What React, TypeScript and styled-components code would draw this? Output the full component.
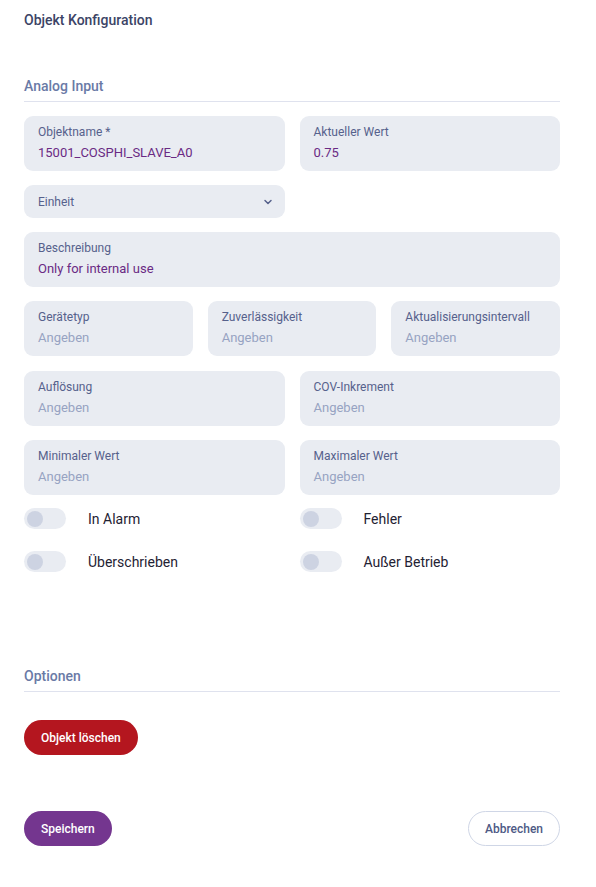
import React, { FC } from 'react'
import styled, { createGlobalStyle } from 'styled-components'

const GlobalStyle = createGlobalStyle`
  body {
    margin: 0;
    background: #fff;
    font-family: Roboto, "Liberation Sans", sans-serif;
  }
`

const Page = styled.div`
  width: 536px;
  padding: 12px 24px 40px;
  display: flex;
  flex-direction: column;
`

const Title = styled.h1`
  margin: 0;
  font-size: 14px;
  line-height: 17px;
  font-weight: 500;
  color: #3c4466;
`

const SectionTitle = styled.h2<{ $top: number }>`
  margin: ${(p) => p.$top}px 0 0;
  padding-bottom: 6px;
  border-bottom: 1px solid #dfe2ee;
  font-size: 14px;
  line-height: 17px;
  font-weight: 500;
  color: #6a7aa6;
`

const Grid = styled.div<{ $cols: number; $top?: number }>`
  display: grid;
  grid-template-columns: repeat(${(p) => p.$cols}, 1fr);
  column-gap: 15px;
  margin-top: ${(p) => p.$top ?? 14}px;
`

const Field = styled.div<{ $span?: number }>`
  grid-column: span ${(p) => p.$span ?? 1};
  height: 55px;
  box-sizing: border-box;
  padding: 9px 14px 0;
  background: #e9ecf2;
  border-radius: 9px;
  display: flex;
  flex-direction: column;
  gap: 6px;
`

const Label = styled.span`
  font-size: 12px;
  line-height: 14px;
  color: #56618c;
  white-space: nowrap;
`

const Value = styled.span<{ $placeholder?: boolean }>`
  font-size: 13px;
  line-height: 16px;
  color: ${(p) => (p.$placeholder ? '#97a3c2' : '#6a2a84')};
`

const Select = styled.div`
  height: 33px;
  box-sizing: border-box;
  padding: 0 12px 0 14px;
  background: #e9ecf2;
  border-radius: 9px;
  display: flex;
  align-items: center;
  justify-content: space-between;
  font-size: 12px;
  color: #56618c;
`

const ToggleGrid = styled.div`
  display: grid;
  grid-template-columns: 1fr 1fr;
  column-gap: 15px;
  row-gap: 22px;
  margin-top: 13px;
`

const ToggleRow = styled.label`
  display: flex;
  align-items: center;
  gap: 22px;
  font-size: 14px;
  color: #1f2233;
`

const Track = styled.span`
  width: 42px;
  height: 21px;
  border-radius: 11px;
  background: #e9ecf2;
  display: flex;
  align-items: center;
  padding-left: 3px;
  box-sizing: border-box;
`

const Knob = styled.span`
  width: 16px;
  height: 16px;
  border-radius: 50%;
  background: #cdd3e2;
`

const Button = styled.button<{ $variant: 'danger' | 'primary' | 'outline' }>`
  height: 35px;
  padding: 0 16px;
  border-radius: 18px;
  font-family: inherit;
  font-size: 12px;
  font-weight: 500;
  cursor: pointer;
  background: ${(p) =>
    p.$variant === 'danger' ? '#b4161f' : p.$variant === 'primary' ? '#74368f' : '#fff'};
  color: ${(p) => (p.$variant === 'outline' ? '#4e5a85' : '#fff')};
  border: 1px solid ${(p) => (p.$variant === 'outline' ? '#cfd6e6' : 'transparent')};
`

const DeleteRow = styled.div`
  margin-top: 28px;
  display: flex;
`

const Footer = styled.div`
  margin-top: 56px;
  display: flex;
  justify-content: space-between;
`

const Chevron: FC = () => (
  <svg width="10" height="10" viewBox="0 0 10 10" fill="none">
    <path d="M2 3.5 5 6.5 8 3.5" stroke="#56618c" strokeWidth="1.5" strokeLinecap="round" strokeLinejoin="round" />
  </svg>
)

const Toggle: FC<{ label: string }> = ({ label }) => (
  <ToggleRow>
    <Track>
      <Knob />
    </Track>
    {label}
  </ToggleRow>
)

const Input: FC<{ label: string; value?: string; span?: number }> = ({ label, value, span }) => (
  <Field $span={span}>
    <Label>{label}</Label>
    <Value $placeholder={!value}>{value ?? 'Angeben'}</Value>
  </Field>
)

const App: FC = () => (
  <>
    <GlobalStyle />
    <Page>
      <Title>Objekt Konfiguration</Title>

      <SectionTitle $top={49}>Analog Input</SectionTitle>

      <Grid $cols={2}>
        <Input label="Objektname *" value="15001_COSPHI_SLAVE_A0" />
        <Input label="Aktueller Wert" value="0.75" />
      </Grid>

      <Grid $cols={2}>
        <Select>
          Einheit
          <Chevron />
        </Select>
      </Grid>

      <Grid $cols={2}>
        <Input label="Beschreibung" value="Only for internal use" span={2} />
      </Grid>

      <Grid $cols={3}>
        <Input label="Gerätetyp" />
        <Input label="Zuverlässigkeit" />
        <Input label="Aktualisierungsintervall" />
      </Grid>

      <Grid $cols={2} $top={15}>
        <Input label="Auflösung" />
        <Input label="COV-Inkrement" />
      </Grid>

      <Grid $cols={2}>
        <Input label="Minimaler Wert" />
        <Input label="Maximaler Wert" />
      </Grid>

      <ToggleGrid>
        <Toggle label="In Alarm" />
        <Toggle label="Fehler" />
        <Toggle label="Überschrieben" />
        <Toggle label="Außer Betrieb" />
      </ToggleGrid>

      <SectionTitle $top={96}>Optionen</SectionTitle>

      <DeleteRow>
        <Button $variant="danger">Objekt löschen</Button>
      </DeleteRow>

      <Footer>
        <Button $variant="primary">Speichern</Button>
        <Button $variant="outline">Abbrechen</Button>
      </Footer>
    </Page>
  </>
)

export default App
